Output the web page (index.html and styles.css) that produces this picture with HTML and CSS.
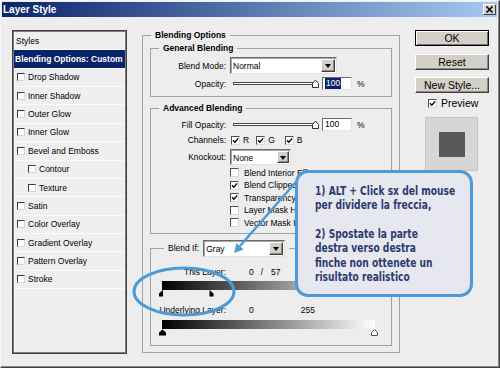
FILE: index.html
```html
<!DOCTYPE html>
<html lang="it">
<head>
    <meta charset="UTF-8">
    <title>Layer Style</title>
    <link rel="stylesheet" href="styles.css">
</head>
<body>
    <div class="dialog">
        <div class="titlebar">
            <span class="title">Layer Style</span>
            <span class="close">
                <svg width="11" height="9" viewBox="0 0 11 9"><path d="M2.5 1.5 L8.5 7.5 M8.5 1.5 L2.5 7.5" stroke="#000" stroke-width="1.6"/></svg>
            </span>
        </div>

        <div class="main">
            <div class="style-list">
                <div class="item">Styles</div>
                <div class="item selected">Blending Options: Custom</div>
                <div class="item"><span class="box"></span>Drop Shadow</div>
                <div class="item"><span class="box"></span>Inner Shadow</div>
                <div class="item"><span class="box"></span>Outer Glow</div>
                <div class="item"><span class="box"></span>Inner Glow</div>
                <div class="item"><span class="box"></span>Bevel and Emboss</div>
                <div class="item sub"><span class="box"></span>Contour</div>
                <div class="item sub"><span class="box"></span>Texture</div>
                <div class="item"><span class="box"></span>Satin</div>
                <div class="item"><span class="box"></span>Color Overlay</div>
                <div class="item"><span class="box"></span>Gradient Overlay</div>
                <div class="item"><span class="box"></span>Pattern Overlay</div>
                <div class="item"><span class="box"></span>Stroke</div>
            </div>

            <fieldset class="group outer">
                <legend>Blending Options</legend>

                <fieldset class="group general">
                    <legend class="inner-legend">General Blending</legend>
                    <div class="row tall">
                        <span class="lbl">Blend Mode:</span>
                        <div class="select mode"><span class="select-text">Normal</span><span class="arrow"></span></div>
                    </div>
                    <div class="row field-row">
                        <span class="lbl">Opacity:</span>
                        <svg class="slider" width="86" height="9" viewBox="0 0 86 9">
                            <rect x="0.5" y="3.5" width="82" height="2" fill="#fff" stroke="#4a4a4a"/>
                            <path d="M79.5 8.5 V4.5 L82.5 1 L85.5 4.5 V8.5 Z" fill="#fff" stroke="#333"/>
                        </svg>
                        <div class="field"><span class="sel">100</span></div>
                        <span class="pct">%</span>
                    </div>
                </fieldset>

                <fieldset class="group advanced">
                    <legend class="inner-legend">Advanced Blending</legend>
                    <div class="row field-row">
                        <span class="lbl">Fill Opacity:</span>
                        <svg class="slider" width="86" height="9" viewBox="0 0 86 9">
                            <rect x="0.5" y="3.5" width="82" height="2" fill="#fff" stroke="#4a4a4a"/>
                            <path d="M79.5 8.5 V4.5 L82.5 1 L85.5 4.5 V8.5 Z" fill="#fff" stroke="#333"/>
                        </svg>
                        <div class="field">100</div>
                        <span class="pct">%</span>
                    </div>
                    <div class="row channels">
                        <span class="lbl">Channels:</span>
                        <span class="cb on"><svg viewBox="0 0 7 7"><path d="M1 3.3 L2.8 5.2 L6.2 1.4"/></svg></span><span class="chan chan-r">R</span>
                        <span class="cb on"><svg viewBox="0 0 7 7"><path d="M1 3.3 L2.8 5.2 L6.2 1.4"/></svg></span><span class="chan chan-g">G</span>
                        <span class="cb on"><svg viewBox="0 0 7 7"><path d="M1 3.3 L2.8 5.2 L6.2 1.4"/></svg></span><span class="chan">B</span>
                    </div>
                    <div class="row knock">
                        <span class="lbl">Knockout:</span>
                        <div class="select knockout"><span class="select-text">None</span><span class="arrow"></span></div>
                    </div>
                    <div class="opt"><span class="cb"></span>Blend Interior Effects as Group</div>
                    <div class="opt"><span class="cb on"><svg viewBox="0 0 7 7"><path d="M1 3.3 L2.8 5.2 L6.2 1.4"/></svg></span>Blend Clipped Layers as Group</div>
                    <div class="opt"><span class="cb on"><svg viewBox="0 0 7 7"><path d="M1 3.3 L2.8 5.2 L6.2 1.4"/></svg></span>Transparency Shapes Layer</div>
                    <div class="opt"><span class="cb"></span>Layer Mask Hides Effects</div>
                    <div class="opt"><span class="cb"></span>Vector Mask Hides Effects</div>
                </fieldset>

                <fieldset class="group blendif">
                    <legend class="if-legend">
                        <div class="legend-row">
                            <span>Blend If:</span>
                            <div class="select gray"><span class="select-text">Gray</span><span class="arrow"></span></div>
                        </div>
                    </legend>
                    <div class="row layer-row">
                        <span class="lbl">This Layer:</span>
                        <span class="num">0</span><span class="slash">/</span><span class="hi">57</span>
                    </div>
                    <div class="grad"></div>
                    <svg class="thumbs" width="213" height="7" viewBox="0 0 213 7">
                        <path d="M1 0 V6.5 H-3 V3.5 Z" fill="#000"/>
                        <path d="M47.5 0 V6.5 H51.5 V3.5 Z" fill="#000"/>
                    </svg>
                    <div class="row layer-row under">
                        <span class="lbl">Underlying Layer:</span>
                        <span class="num">0</span><span class="top">255</span>
                    </div>
                    <div class="grad"></div>
                    <svg class="thumbs" width="213" height="7" viewBox="0 0 213 7">
                        <path d="M-3 6.5 V3.5 L0.5 0.5 L4 3.5 V6.5 Z" fill="#000"/>
                        <path d="M209.5 6.5 V3.5 L212.5 0.5 L215.5 3.5 V6.5 Z" fill="#fff" stroke="#555"/>
                    </svg>
                </fieldset>
            </fieldset>

            <div class="actions">
                <div class="btn default">OK</div>
                <div class="btn">Reset</div>
                <div class="btn">New Style...</div>
                <div class="preview-row">
                    <span class="cb on"><svg viewBox="0 0 7 7"><path d="M1 3.3 L2.8 5.2 L6.2 1.4"/></svg></span>Preview
                </div>
                <div class="preview">
                    <div class="swatch"></div>
                </div>
            </div>
        </div>
    </div>

    <!-- annotations drawn over the dialog -->
    <svg class="annot" width="500" height="368" viewBox="0 0 500 368">
        <ellipse cx="184" cy="291.5" rx="50" ry="23.5" fill="none" stroke="#4a9bd8" stroke-width="3"/>
        <line x1="302" y1="175" x2="240" y2="246" stroke="#4a9bd8" stroke-width="2.5"/>
        <polygon points="234,253 243.5,249.5 236.5,243" fill="#4a9bd8"/>
    </svg>

    <div class="callout">
        <div class="callout-text">
            <p>1) ALT + Click sx del mouse<br>per dividere la freccia,</p>
            <p>2) Spostate la parte<br>destra verso destra<br>finche non ottenete un<br>risultato realistico</p>
        </div>
    </div>
</body>
</html>
```

FILE: styles.css
```css
* {
    margin: 0;
    padding: 0;
    box-sizing: border-box;
}

body {
    position: relative;
    width: 500px;
    height: 368px;
    overflow: hidden;
    background: #ededed;
    font-family: 'Liberation Sans', Arial, sans-serif;
    font-size: 8.5px;
    color: #000;
}

.dialog {
    width: 500px;
    height: 368px;
    background: #ededed;
    border: 1px solid;
    border-color: #f6f6f6 #404040 #404040 #f6f6f6;
    box-shadow: inset -1px -1px 0 #8a8a8a;
}

/* title bar */
.titlebar {
    display: flex;
    align-items: center;
    justify-content: space-between;
    height: 15px;
    margin: 1px 2px 0 1px;
    padding: 0 1px 0 1px;
    background: linear-gradient(to right, #0a246a, #a6caf0);
}

.title {
    color: #fff;
    font-size: 10px;
    font-weight: 700;
}

.close {
    display: flex;
    align-items: center;
    justify-content: center;
    width: 13px;
    height: 11px;
    background: #d4d0c8;
    border: 1px solid;
    border-color: #fff #404040 #404040 #fff;
}

.main {
    display: flex;
    align-items: flex-start;
    padding: 13px 0 0 11px;
}

/* left list of styles */
.style-list {
    width: 115px;
    height: 324px;
    border: 1px solid #404040;
    box-shadow: inset 0 0 0 1px #7c7c7c;
    padding: 1px;
    background: #efefef;
}

.item {
    display: flex;
    align-items: center;
    height: 18.36px;
    padding-left: 2px;
    border-bottom: 1px solid #fbfbfb;
    white-space: nowrap;
}

.item .box {
    width: 8px;
    height: 8px;
    margin: 0 3px 0 1px;
    background: #fff;
    border: 1px solid;
    border-color: #3a3a3a #d6d6d6 #d6d6d6 #3a3a3a;
}

.item.sub {
    padding-left: 13px;
}

.item.selected {
    background: #0a246a;
    color: #fff;
    font-weight: 700;
    padding-left: 1px;
}

/* group boxes */
.group {
    border: 1px solid #a2a2a2;
    margin: 0;
    padding: 0;
    min-width: 0;
}

.group legend {
    font-weight: 700;
    line-height: 11px;
    padding: 0 4px;
}

.outer {
    width: 258px;
    margin-left: 15px;
    padding: 2px 7px 6px 7px;
}

.outer > legend {
    margin-left: 1px;
}

.inner-legend {
    margin-left: 8px;
}

.general {
    padding: 3px 0 6px 0;
}

.advanced {
    margin-top: 6px;
    padding: 4px 0 4px 0;
}

.blendif {
    margin-top: 6px;
    padding: 9px 0 9px 0;
}

.if-legend {
    margin-left: 13px;
}

.group .if-legend {
    font-weight: 400;
    line-height: 17px;
}

.legend-row {
    display: flex;
    align-items: center;
    gap: 4px;
}

.row {
    display: flex;
    align-items: center;
    height: 13px;
    white-space: nowrap;
}

.row.tall {
    height: 17px;
}

.field-row {
    margin-top: 3px;
}

.advanced .field-row {
    margin-top: 0;
}

.lbl {
    flex: none;
    width: 75px;
    margin-right: 4px;
    text-align: right;
}

/* drop-down boxes */
.select {
    display: flex;
    align-items: center;
    justify-content: space-between;
    height: 17px;
    padding: 1px 1px 1px 2px;
    background: #fff;
    border: 1px solid;
    border-color: #6a6a6a #e2e2e2 #e2e2e2 #6a6a6a;
    box-shadow: inset 1px 1px 0 #a8a8a8;
}

.select-text {
    padding-top: 1px;
}

.arrow {
    position: relative;
    width: 14px;
    height: 13px;
    background: #d4d0c8;
    border: 1px solid;
    border-color: #fff #404040 #404040 #fff;
    box-shadow: inset -1px -1px 0 #8a8a8a;
}

.arrow::after {
    content: "";
    position: absolute;
    left: 3px;
    top: 4px;
    border-left: 3.5px solid transparent;
    border-right: 3.5px solid transparent;
    border-top: 4px solid #000;
}

.mode {
    width: 107px;
}

.knockout {
    width: 61px;
    height: 16px;
}

.knockout .arrow {
    width: 12px;
    height: 12px;
}

.knockout .arrow::after {
    left: 2px;
}

.gray {
    width: 82px;
}

/* slider + numeric field */
.slider {
    flex: none;
    margin: 0 3px 0 3px;
}

.field {
    width: 30px;
    height: 13px;
    padding-left: 2px;
    line-height: 11px;
    background: #fff;
    border: 1px solid;
    border-color: #6a6a6a #e2e2e2 #e2e2e2 #6a6a6a;
}

.sel {
    display: inline-block;
    padding: 0 1px;
    background: #0a246a;
    color: #fff;
}

.pct {
    margin-left: 5px;
}

/* checkboxes */
.cb {
    display: inline-flex;
    flex: none;
    width: 9px;
    height: 9px;
    background: #fff;
    border: 1px solid;
    border-color: #505050 #d8d8d8 #d8d8d8 #505050;
}

.cb svg {
    width: 7px;
    height: 7px;
}

.cb path {
    fill: none;
    stroke: #000;
    stroke-width: 1.4;
}

.channels {
    height: 12px;
    margin-top: 3px;
}

.channels .cb {
    margin-left: 1px;
}

.chan {
    margin-left: 3px;
}

.chan-r {
    margin-right: 6px;
}

.chan-g {
    margin-right: 9px;
}

.knock {
    height: 16px;
    margin-top: 3px;
}

.opt {
    display: flex;
    align-items: center;
    height: 12.5px;
    padding-left: 79px;
    white-space: nowrap;
}

.knock + .opt {
    margin-top: 1.5px;
}

.opt .cb {
    margin-right: 5px;
}

/* blend if */
.layer-row {
    height: 11px;
}

.num {
    margin-left: 19px;
}

.slash {
    margin-left: 7px;
}

.hi {
    margin-left: 8px;
}

.top {
    margin-left: 47px;
}

.under {
    margin-top: 7.5px;
}

.grad {
    width: 213px;
    height: 9px;
    margin: 4px 0 0 11px;
    background: linear-gradient(to right, #000, #fff);
}

.under + .grad {
    margin-top: 4.5px;
}

.thumbs {
    display: block;
    margin-left: 11px;
    overflow: visible;
}

/* right-hand buttons */
.actions {
    display: flex;
    flex-direction: column;
    width: 74px;
    margin-left: 15px;
}

.btn {
    height: 16px;
    margin-bottom: 7.5px;
    background: #d4d0c8;
    border: 1px solid;
    border-color: #fff #404040 #404040 #fff;
    box-shadow: inset -1px -1px 0 #8a8a8a;
    font-size: 10.5px;
    line-height: 14px;
    text-align: center;
}

.btn.default {
    border-color: #000;
    box-shadow: inset 1px 1px 0 #fff, inset -1px -1px 0 #707070;
}

.preview-row {
    display: flex;
    align-items: center;
    height: 12px;
    margin-top: -3.5px;
    padding-left: 13px;
    font-size: 10.5px;
}

.preview-row .cb {
    margin-right: 4px;
}

.preview {
    display: flex;
    align-items: center;
    justify-content: center;
    width: 53px;
    height: 54px;
    margin: 8px 0 0 10px;
    background: #d6d6d6;
    border: 1px solid #c6c6c6;
}

.swatch {
    width: 26px;
    height: 25px;
    background: #595959;
}

/* annotation layer */
.annot {
    position: absolute;
    left: 0;
    top: 0;
    pointer-events: none;
}

.callout {
    position: absolute;
    left: 295px;
    top: 170px;
    width: 178px;
    height: 127px;
    padding: 10.5px 0 0 17px;
    background: #e7e7ef;
    border: 3px solid #4f9bd9;
    border-radius: 13px;
    overflow: hidden;
}

.callout-text {
    width: 190px;
    color: #2c3b6f;
    font-family: 'DejaVu Sans Condensed', 'DejaVu Sans', sans-serif;
    font-stretch: condensed;
    font-weight: 700;
    font-size: 13px;
    line-height: 14.4px;
    white-space: nowrap;
    transform: scaleX(0.78);
    transform-origin: left top;
}

.callout-text p + p {
    margin-top: 14.4px;
}
```
